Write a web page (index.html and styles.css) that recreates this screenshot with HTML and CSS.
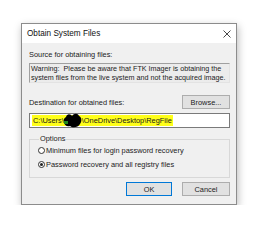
FILE: index.html
```html
<!DOCTYPE html>
<html>
<head>
<meta charset="utf-8">
<link rel="stylesheet" href="styles.css">
</head>
<body>
<div class="page">
  <div class="dialog">
    <div class="titlebar">
      <span class="title">Obtain System Files</span>
      <svg class="close" width="8" height="8" viewBox="0 0 8 8"><path d="M0.5 0.5 L7.5 7.5 M7.5 0.5 L0.5 7.5" stroke="#333" stroke-width="0.9"/></svg>
    </div>
    <div class="body">
      <div class="label src">Source for obtaining files:</div>
      <div class="warning">Warning:&nbsp; Please be aware that FTK Imager is obtaining the system files from the live system and not the acquired image.</div>
      <div class="destrow">
        <span class="label">Destination for obtained files:</span>
        <button class="btn">Browse...</button>
      </div>
      <div class="input">
        <span class="hl">C:\Users\<span class="blob"><svg width="20" height="15" viewBox="0 0 20 15"><path d="M3 4 C4 0 8 1 9 3 C11 0 15 0 16 3 C19 4 19 9 17 11 C15 15 9 15 7 13 C4 14 1 12 1 9 C0 7 1 5 3 4 Z" fill="#000"/><rect x="1" y="8" width="4" height="3" fill="#1f8a1f"/></svg></span>\OneDrive\Desktop\RegFile</span>
      </div>
      <fieldset class="options">
        <legend>Options</legend>
        <label class="radio"><span class="circle"></span>Minimum files for login password recovery</label>
        <label class="radio"><span class="circle checked"></span>Password recovery and all registry files</label>
      </fieldset>
      <div class="buttons">
        <button class="btn ok">OK</button>
        <button class="btn">Cancel</button>
      </div>
    </div>
  </div>
</div>
</body>
</html>
```

FILE: styles.css
```css
html, body {
  margin: 0;
  padding: 0;
  background: #ffffff;
}
.page {
  padding: 23px 0 0 21px;
  font-family: "Liberation Sans", Arial, sans-serif;
  font-size: 7.4px;
  color: #1a1a1a;
}
.dialog {
  width: 214px;
  height: 180px;
  border: 1px solid #8c8c8c;
  background: #f0f0f0;
  box-shadow: 1px 3px 8px rgba(0,0,0,0.28);
  display: flex;
  flex-direction: column;
}
.titlebar {
  height: 19px;
  background: #ffffff;
  display: flex;
  align-items: center;
  justify-content: space-between;
  padding: 0 5px 0 5px;
}
.title {
  font-size: 8.2px;
  color: #111;
}
.close {
  display: block;
}
.body {
  padding: 7px 6px 0 7px;
  display: flex;
  flex-direction: column;
}
.label {
  line-height: 9px;
}
.warning {
  margin-top: 4px;
  height: 18px;
  border: 1px solid #a0a0a0;
  border-right-color: #e3e3e3;
  border-bottom-color: #e3e3e3;
  background: #ececec;
  line-height: 9px;
  padding: 0 0 0 1px;
  color: #222;
  font-size: 7.2px;
}
.destrow {
  margin-top: 12px;
  display: flex;
  justify-content: space-between;
  align-items: center;
}
.btn {
  width: 48px;
  height: 14px;
  border: 1px solid #adadad;
  background: #e1e1e1;
  font-family: "Liberation Sans", Arial, sans-serif;
  font-size: 7.4px;
  color: #222;
  padding: 0;
  margin: 0;
  box-sizing: border-box;
}
.input {
  margin-top: 4px;
  height: 15px;
  box-sizing: border-box;
  border: 1px solid #7a7a7a;
  background: #fff;
  padding: 1px 2px;
  display: flex;
  align-items: center;
}
.hl {
  background: #ffff1a;
  line-height: 11px;
  display: inline-flex;
  align-items: center;
  padding-left: 1px;
  padding-right: 1px;
}
.blob {
  display: inline-block;
  width: 18px;
  height: 11px;
  position: relative;
}
.blob svg {
  position: absolute;
  left: -1px;
  top: -2px;
}
.options {
  margin: 7px 0 0 0;
  padding: 3px 0 0 8px;
  border: 1px solid #d8d8d8;
  height: 43px;
  box-sizing: border-box;
  display: flex;
  flex-direction: column;
  gap: 5px;
}
.options legend {
  padding: 0 1px;
  margin-left: 1px;
  line-height: 8px;
  color: #222;
}
.radio {
  display: flex;
  align-items: center;
  line-height: 9px;
  color: #222;
}
.circle {
  width: 7px;
  height: 7px;
  box-sizing: border-box;
  border: 1px solid #333;
  border-radius: 50%;
  background: #fff;
  margin-right: 1px;
  position: relative;
}
.circle.checked::after {
  content: "";
  position: absolute;
  left: 1px;
  top: 1px;
  width: 3px;
  height: 3px;
  border-radius: 50%;
  background: #222;
}
.buttons {
  margin-top: 4px;
  display: flex;
  justify-content: flex-end;
  gap: 10px;
}
.btn.ok {
  width: 46px;
  border: 1px solid #0078d7;
}
```
